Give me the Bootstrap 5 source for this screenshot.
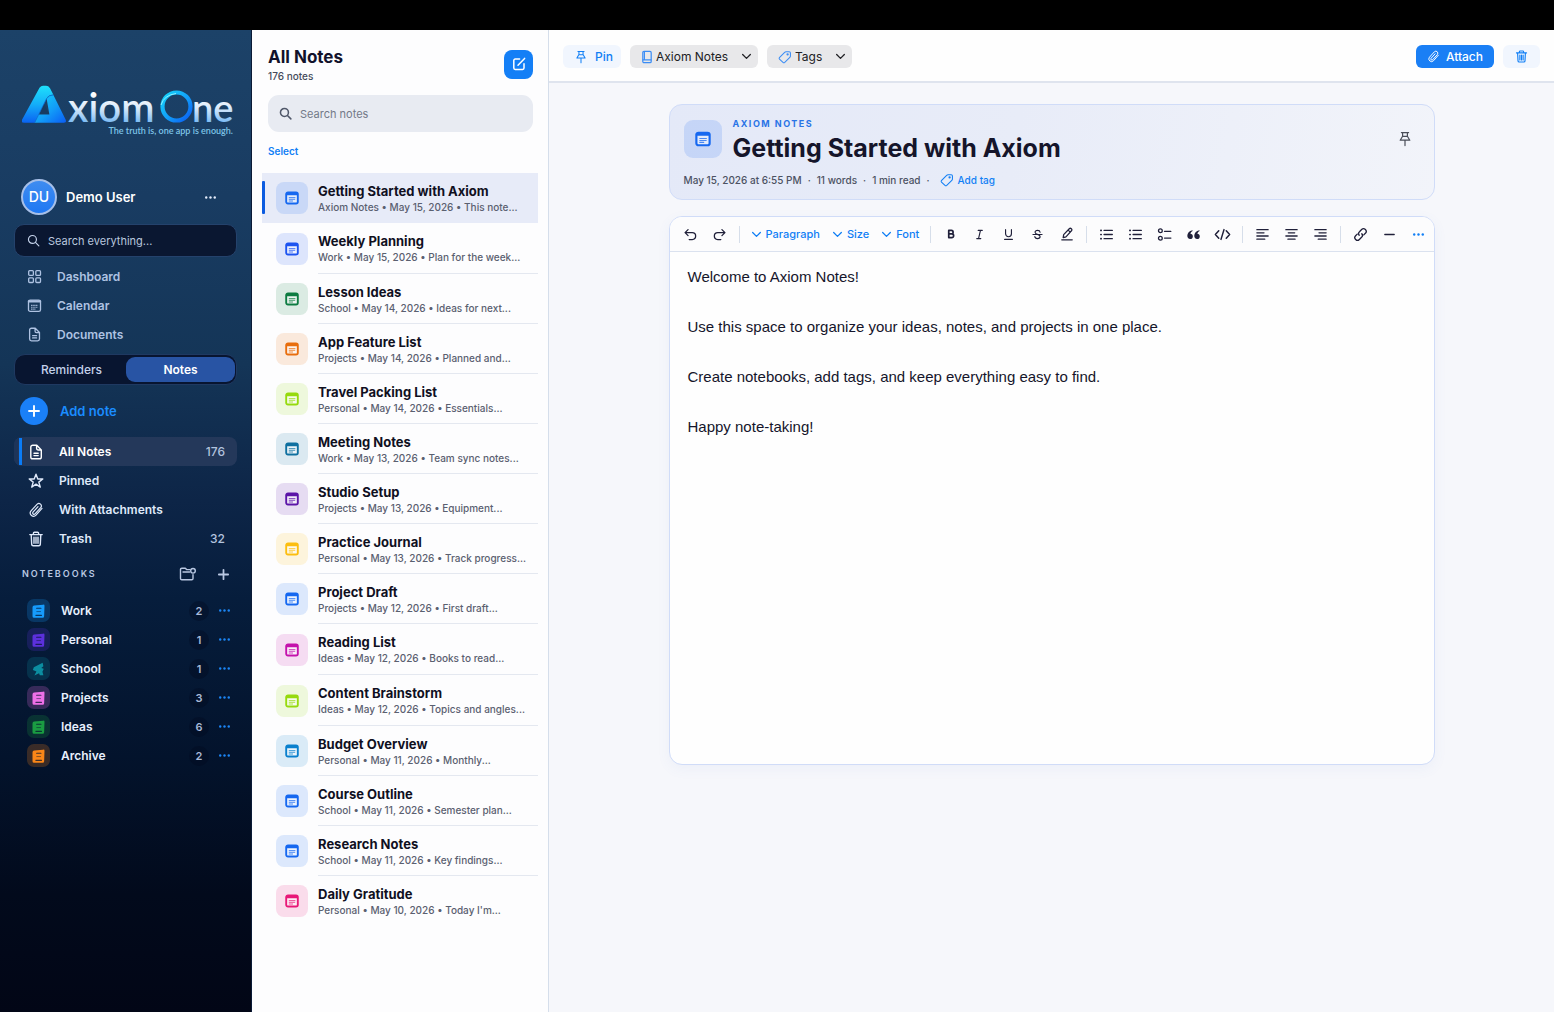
<!DOCTYPE html>
<html lang="en">
<head>
<meta charset="utf-8">
<meta name="viewport" content="width=device-width, initial-scale=1">
<title>AxiomOne Notes</title>
<link rel="stylesheet" href="https://cdn.jsdelivr.net/npm/bootstrap@5.3.0/dist/css/bootstrap.min.css">
<style>
  :root { --accent: #117ff5; --ink: #12122b; }
  body { font-family: Inter, "Liberation Sans", sans-serif; font-size: 13px; line-height: 16px; color: var(--ink); background: #f6f7fb; }
  svg { display: block; flex: none; }
  .ico { fill: none; stroke: currentColor; stroke-width: 1.4; stroke-linecap: round; stroke-linejoin: round; }
  .ico-strong { stroke-width: 1.9; }
  button { border: 0; background: none; padding: 0; color: inherit; }
  a { color: inherit; text-decoration: none; }
  .window-strip { height: 30px; background: #000; }

  /* Sidebar */
  .side { width: 252px; padding: 51px 14px 0 14px; color: #e3ecfb; font-weight: 600; border-right: 1px solid #0a1a36;
    background: linear-gradient(180deg, #1c4268 0%, #193c62 17%, #143557 34%, #0d2547 48%, #061d3c 58%, #03132c 74%, #020a1c 88%, #020616 100%); }
  .user-row { height: 36px; margin-top: 38px; padding: 0 20px 0 7px; }
  .avatar-disc { width: 36px; height: 36px; border: 2px solid #a6bfe8; border-radius: 50%; background: linear-gradient(#3f8cf0, #1f78f3); font-size: 14px; font-weight: 500; color: #fff; }
  .user-name { font-size: 13px; color: #fff; margin-left: 9px; }
  .side-search { height: 33px; margin-top: 9px; padding: 0 12px; border: 1px solid #24426c; border-radius: 10px; background: #0a1731; color: #c6d4ec; }
  .side-search input, .list-search input { border: 0; background: none; outline: 0; padding: 0; min-width: 0; font-size: 11px; color: inherit; }
  .side-search input::placeholder { color: #b9c7df; opacity: 1; }
  .nav-line { height: 29px; padding: 0 12px 0 14px; gap: 15px; border-radius: 8px; color: #dfe9fa; font-size: 12px; }
  .nav-main { margin-top: 5px; }
  .nav-main .nav-line { color: #aec2e2; padding-left: 13px; }
  .nav-line .tally { color: #b3c3df; font-weight: 500; }
  .nav-line.current { background: #24385a; color: #fff; box-shadow: inset 4px 0 0 #1d355a; position: relative; }
  .nav-line.current::before { content: ""; position: absolute; left: 5px; top: 1px; bottom: 1px; width: 3px; background: #0a7cf8; }
  .switcher { height: 31px; margin-top: 5px; padding: 2px 1px 2px 2px; border: 1px solid #1f3961; border-radius: 11px; background: #081530; font-size: 12px; color: #c3d1ea; }
  .switcher button { border-radius: 9px; font-weight: 500; }
  .switcher button.on { background: #2854a4; color: #fff; font-weight: 600; }
  .add-row { height: 28px; margin: 12px 0 12px 6px; gap: 12px; color: #1a8cff; font-size: 13px; }
  .add-disc { width: 28px; height: 28px; border-radius: 50%; background: #1a80f8; color: #fff; }
  .books-head { height: 30px; margin-top: 6px; padding: 0 7px 0 8px; font-size: 9px; letter-spacing: 2px; color: #b9c8e2; }
  .books-body { padding-top: 7px; }
  .book-line { height: 29px; padding: 0 6px 0 13px; font-size: 12px; color: #e8f0fd; }
  .book-tile { width: 23px; height: 23px; border-radius: 7px; margin-right: 11px; background: rgba(var(--tone), .22); color: rgb(var(--tone)); }
  .book-count { width: 20px; height: 20px; border-radius: 50%; background: rgba(2, 10, 30, .35); font-size: 11px; color: #a9bad8; margin-right: 9px; }
  .book-line .more { color: #1c86f5; }

  /* Notes list */
  .list-pane { width: 297px; background: #fdfdfe; border-right: 1px solid #d5deeb; padding: 15px 10px 0 10px; }
  .list-top { padding: 0 5px 0 6px; }
  .list-title { font-size: 17px; line-height: 24px; font-weight: 700; margin: 0; }
  .list-sub { font-size: 10px; line-height: 14px; font-weight: 500; color: #454b5b; }
  .compose { width: 29px; height: 29px; border-radius: 8px; background: #147ff6; color: #fff; }
  .list-search { height: 37px; margin: 12px 5px 0 6px; padding: 0 11px; border-radius: 11px; background: #e8ebf2; color: #50586a; }
  .list-search input::placeholder { color: #737988; opacity: 1; }
  .pick { margin: 11px 0 14px 6px; font-size: 10px; font-weight: 600; color: var(--accent); }
  .note { height: 50px; padding-left: 14px; }
  .note:nth-child(2), .note:nth-child(10), .note:nth-child(11) { height: 51px; }
  .note-tile { width: 32px; height: 32px; border-radius: 8px; background: rgba(var(--tone), .14); color: rgb(var(--tone)); margin-right: 10px; }
  .note-text { border-bottom: 1px solid #e4e8f0; height: 100%; padding-top: 9px; min-width: 0; }
  .note:last-child .note-text, .note.current .note-text { border-color: transparent; }
  .note-name { font-size: 13px; line-height: 18px; font-weight: 700; color: #10101f; }
  .note-meta { font-size: 10px; line-height: 14px; font-weight: 500; color: #5a6070; white-space: nowrap; }
  .note.current { background: #e7ebf8; position: relative; }
  .note.current::before { content: ""; position: absolute; left: 0; top: 8px; bottom: 9px; width: 3px; background: #0b5be0; border-radius: 1px; }

  .t-blue { --tone: 22, 104, 240; } .t-indigo { --tone: 30, 84, 240; } .t-green { --tone: 14, 124, 66; }
  .t-orange { --tone: 232, 110, 14; } .t-lime { --tone: 150, 218, 14; } .t-teal { --tone: 16, 112, 160; }
  .t-purple { --tone: 92, 22, 168; } .t-gold { --tone: 252, 190, 16; } .t-magenta { --tone: 196, 18, 172; }
  .t-sky { --tone: 10, 128, 206; } .t-pink { --tone: 232, 24, 120; }
  .b-blue { --tone: 22, 156, 252; } .b-violet { --tone: 92, 48, 220; } .b-teal { --tone: 12, 142, 160; }
  .b-pink { --tone: 238, 112, 232; } .b-green { --tone: 26, 156, 66; } .b-orange { --tone: 250, 134, 24; }

  /* Note view */
  .view-bar { height: 53px; padding: 2px 14px 0 14px; gap: 9px; background: #fefefe; border-bottom: 2px solid #dfe4ee; font-size: 12px; }
  .chip { height: 23px; border-radius: 6px; font-weight: 500; }
  .chip-soft { background: #f1f6fe; color: var(--accent); }
  .chip-grey { background: #e8e8ea; color: #202024; padding: 0 6px 0 11px; gap: 3px; font-weight: 400; }
  .chip-grey select { appearance: none; border: 0; background: none; padding: 0; color: inherit; }
  .chip-grey .caret { margin-left: 9px; }
  .chip-grey .lead-ico { color: #3b8df5; }
  .chip-fill { background: #1a7ff5; color: #fff; padding: 0 11px; gap: 6px; }
  .sheet-col { max-width: 766px; width: 100%; }
  .note-head { margin-top: 21px; padding: 12px 14px 11px 14px; border: 1px solid #d0dcf8; border-radius: 13px; background: linear-gradient(100deg, #e4e9f8, #e8ecf8 45%, #f2f4fa); }
  .head-tile { width: 38px; height: 38px; border-radius: 9px; background: rgba(var(--tone), .15); color: rgb(var(--tone)); margin-top: 3px; margin-right: 11px; }
  .head-pin { color: #4a4e58; margin: 0 8px 4px 0; }
  .kicker { font-size: 9px; line-height: 14px; font-weight: 700; letter-spacing: 1.5px; color: #2a74e6; }
  .head-name { font-size: 25px; line-height: 34px; font-weight: 700; margin: 0; color: #15152b; }
  .head-meta { font-size: 10px; line-height: 16px; font-weight: 500; color: #4c5263; gap: 6px; margin-top: 7px; }
  .head-meta a { color: var(--accent); }
  .editor { margin-top: 16px; height: 549px; border: 1px solid #d0dcf8; border-radius: 13px; background: #fefefe; box-shadow: 0 4px 14px rgba(90, 120, 200, .06); overflow: hidden; }
  .tools { height: 35px; border-bottom: 1px solid #dbe2ef; color: #20203a; padding-left: 6px; background: #fcfcfd; }
  .tools .split { width: 1px; height: 17px; margin: 0 5px; background: #d6deea; }
  .tools .tool { width: 29px; height: 24px; }
  .tools .tool svg { margin: 0 auto; }
  .tools .blue-drop { color: var(--accent); font-size: 11px; font-weight: 500; padding: 0 6px; gap: 4px; }
  .tools .more { color: var(--accent); }
  .page-text { font-family: "Liberation Sans", Arial, sans-serif; font-size: 15px; line-height: 25px; color: #15152b; padding: 12px 18px; outline: 0; }
  .page-text p { margin: 0 0 25px; }
</style>
<script src="https://cdn.jsdelivr.net/npm/bootstrap@5.3.0/dist/js/bootstrap.bundle.min.js"></script>
</head>
<body class="d-flex flex-column min-vh-100">

<svg width="0" height="0" class="position-absolute" aria-hidden="true">
  <symbol id="i-search" viewBox="0 0 16 16"><circle cx="6.7" cy="6.7" r="4.9"/><path d="M10.4 10.4 14.6 14.6"/></symbol>
  <symbol id="i-dots" viewBox="0 0 14 14"><g fill="currentColor" stroke="none"><circle cx="2.4" cy="7" r="1.3"/><circle cx="7" cy="7" r="1.3"/><circle cx="11.6" cy="7" r="1.3"/></g></symbol>
  <symbol id="i-grid" viewBox="0 0 16 16"><rect x="1.8" y="1.8" width="5" height="5" rx="1"/><rect x="9.4" y="1.8" width="5" height="5" rx="1"/><rect x="1.8" y="9.4" width="5" height="5" rx="1"/><rect x="9.4" y="9.4" width="5" height="5" rx="1"/></symbol>
  <symbol id="i-cal" viewBox="0 0 16 16"><rect x="1.6" y="2.2" width="12.8" height="12" rx="1.8"/><path d="M2 3.6h12" stroke-width="2.4"/><path d="M4.4 7.8h7.4M4.4 9.8h7.4M4.4 11.8h5" stroke-width="1.2" stroke-dasharray="1.5 .8" stroke-linecap="butt"/></symbol>
  <symbol id="i-doc" viewBox="0 0 16 16"><path d="M2.8 3.2a1.9 1.9 0 0 1 1.9-1.9h4.1l4.5 4.6v7a1.9 1.9 0 0 1-1.9 1.9H4.7a1.9 1.9 0 0 1-1.9-1.9zM8.6 1.6v3a1.4 1.4 0 0 0 1.4 1.4h3M6 9.2h4.2M6 11.6h4.2"/></symbol>
  <symbol id="i-star" viewBox="0 0 16 16"><path d="M8 1.2 9.8 6h5l-4 3.1 1.5 5L8 11.2l-4.3 2.9 1.5-5L1.2 6h5z"/></symbol>
  <symbol id="i-clip" viewBox="0 0 16 16"><path stroke-width="1.2" d="M14 6.4 8 13.200a3.300 3.300 0 0 1-5-4.300l6.200-6.800a2.500 2.500 0 0 1 3.700 3.300l-5.900 6.500a1.300 1.300 0 0 1-2-1.700l5-5.500"/></symbol>
  <symbol id="i-trash" viewBox="0 0 16 16"><path d="M1.8 3.6h12.4M5.400 3.400V2.200a1 1 0 0 1 1-1h3.200a1 1 0 0 1 1 1v1.200M3.200 3.800l.5 9.600a1.500 1.500 0 0 0 1.500 1.400h5.600a1.500 1.500 0 0 0 1.500-1.400l.5-9.600M6 6.200v6M8 6.200v6M10 6.200v6"/></symbol>
  <symbol id="i-folder" viewBox="0 0 18 16"><path d="M11 3.600H7.600L6.300 2.200H2.800A1.300 1.300 0 0 0 1.500 3.500v9a1.300 1.300 0 0 0 1.300 1.300h9.900a1.300 1.300 0 0 0 1.300-1.300V8.600M4 6h6.600"/><circle cx="14" cy="4.800" r="2.300"/></symbol>
  <symbol id="i-plus" viewBox="0 0 14 14"><path d="M7 2v10M2 7h10"/></symbol>
  <symbol id="i-book" viewBox="0 0 16 16"><path fill="currentColor" stroke="none" d="M1.600 4.200Q1.600 2.400 3.400 2.200L13 1.200Q14.600 1 14.400 2.600L14 13.600Q14 15.200 12.400 15.200H3.200Q1.600 15.200 1.600 13.600z"/><path stroke="#04132d" stroke-opacity=".75" stroke-width="1.200" d="M6 5h4.600M5.200 12.600h6"/><path stroke="#04132d" stroke-opacity=".5" stroke-width="1" d="M6.200 8.600h4"/></symbol>
  <symbol id="i-bolt" viewBox="0 0 16 16"><path fill="currentColor" stroke="none" d="M3 6 12.400 1.400 13.200 5 11 7l2.600.8-1.400 3 1 3.800H9.400L8.600 12.600 3.600 15l2.200-4.400L2 9z"/></symbol>
  <symbol id="i-note" viewBox="0 0 14 14"><rect x="1.200" y="1.500" width="11.600" height="11" rx="1.800" fill="#fff" fill-opacity=".5" stroke-width="1.900"/><path d="M2 3h10" stroke-width="2.400"/><path d="M4.200 6.600h5.800M4.200 8.300h5.600M4.200 10h3.400" stroke-width="1" stroke-opacity=".75"/></symbol>
  <symbol id="i-compose" viewBox="0 0 14 14"><path stroke-width="1.500" d="M7.600 2H3.200A1.400 1.400 0 0 0 1.800 3.400v7.600a1.400 1.400 0 0 0 1.400 1.400h7.400a1.400 1.400 0 0 0 1.400-1.400V6.800M6 8.200 12.600 1.400"/></symbol>
  <symbol id="i-pin" viewBox="0 0 14 16"><path stroke-width="1.200" d="M3.400 1.600h7.200M4.600 1.800v3.400L2.200 9.200h9.600L9.400 5.200V1.800M7 9.400v5.200M5.400 5.400h3.200"/></symbol>
  <symbol id="i-notebook" viewBox="0 0 12 16"><rect x="1.200" y="1.600" width="9.600" height="12.800" rx="1.400"/><path d="M1.400 11.400h9.200M3 2v9.200"/></symbol>
  <symbol id="i-tag" viewBox="0 0 16 16"><path stroke-width="1.200" d="M1.600 8.800 7.600 2.600Q8.200 2 9.200 2h3.600q1.400 0 1.400 1.400v3.400q0 1-.7 1.700l-5.800 5.700q-1 .9-2 0L1.700 10.500q-.8-.9-.1-1.700z"/><circle cx="11" cy="5" r=".6"/></symbol>
  <symbol id="i-chev" viewBox="0 0 12 12"><path d="M1.800 3.800 6 8l4.200-4.200"/></symbol>
  <symbol id="i-undo" viewBox="0 0 16 16"><path d="M5.400 2.800 2.200 6l3.200 3.200M2.400 6h7.400a3.700 3.700 0 0 1 0 7.400H6.600"/></symbol>
  <symbol id="i-redo" viewBox="0 0 16 16"><path d="M10.600 2.800 13.800 6l-3.200 3.200M13.600 6H6.200a3.700 3.700 0 0 0 0 7.400h3.200"/></symbol>
  <symbol id="i-pen" viewBox="0 0 16 16"><path d="M3.600 12.200 4.200 8.800 10.600 2a1.700 1.700 0 0 1 2.500 2.300L6.800 11.200zM2 14.600h12M9.400 3.600l2.200 2.200"/></symbol>
  <symbol id="i-list" viewBox="0 0 16 16"><path d="M5.400 3.600h8.800M5.400 8h8.800M5.400 12.400h8.800"/><path d="M2 3.600h.3M2 8h.3M2 12.400h.3" stroke-width="1.800"/></symbol>
  <symbol id="i-check" viewBox="0 0 16 16"><circle cx="3.600" cy="4" r="2"/><circle cx="3.600" cy="12" r="2"/><path d="M8 4.600h6.800M8 11.800h6.800"/></symbol>
  <symbol id="i-quote" viewBox="0 0 16 16"><path fill="currentColor" stroke="none" d="M6.800 3.400C3.400 4 1.400 6.400 1.400 9.400c0 2 1.200 3.400 3 3.400 1.700 0 2.900-1.200 2.900-2.800S6.200 7.400 4.700 7.300C5 6 5.700 5 7.100 4.300zM14.200 3.400c-3.400.6-5.400 3-5.400 6 0 2 1.200 3.400 3 3.400 1.700 0 2.900-1.200 2.900-2.800s-1.100-2.600-2.600-2.700c.3-1.300 1-2.300 2.400-3z"/></symbol>
  <symbol id="i-code" viewBox="0 0 18 16"><path stroke-width="1.600" d="M5 4 1.400 8 5 12M13 4l3.600 4L13 12M10.600 2.800 7.400 13.200"/></symbol>
  <symbol id="i-left" viewBox="0 0 16 16"><path d="M2 2.800h12M2 6.200h7.600M2 9.600h12M2 13h8.400"/></symbol>
  <symbol id="i-center" viewBox="0 0 16 16"><path d="M2 2.800h12M4.600 6.200h6.800M2 9.600h12M4.200 13h7.600"/></symbol>
  <symbol id="i-right" viewBox="0 0 16 16"><path d="M2 2.800h12M6.400 6.200H14M2 9.600h12M5.600 13H14"/></symbol>
  <symbol id="i-link" viewBox="0 0 16 16"><path d="M6.600 8.800a2.800 2.800 0 0 1 .3-3.800l2.300-2.300a2.800 2.800 0 0 1 4 4L11.500 8.400M9.400 7.200a2.800 2.800 0 0 1-.3 3.800l-2.300 2.300a2.800 2.800 0 0 1-4-4L4.500 7.600"/></symbol>
  <symbol id="i-bold" viewBox="0 0 16 16"><path d="M5 3.200h3.500a2.300 2.300 0 0 1 0 4.600H5zM5 7.800h4a2.500 2.500 0 0 1 0 5H5z" stroke-width="2.300"/></symbol>
  <symbol id="i-ital" viewBox="0 0 16 16"><path d="M6.400 3h5M4.600 13h5M9.200 3 6.800 13"/></symbol>
  <symbol id="i-under" viewBox="0 0 16 16"><path d="M4.400 2v5.200a3.600 3.600 0 0 0 7.200 0V2M3.200 14h9.600"/></symbol>
  <symbol id="i-strike" viewBox="0 0 16 16"><path d="M11.200 5.200c-.2-1.500-1.400-2.300-3.100-2.300-1.900 0-3.100.9-3.100 2.300 0 1.500 1.300 2.100 3 2.600 1.900.5 3.200 1.100 3.200 2.700 0 1.500-1.200 2.500-3.200 2.500-1.900 0-3.100-.8-3.300-2.400M2.400 8h11.200"/></symbol>
  <symbol id="i-rule" viewBox="0 0 16 16"><path d="M3 8h10"/></symbol>
</svg>

<div class="window-strip"></div>
<div class="d-flex flex-grow-1">

  <aside class="side flex-shrink-0">
    <svg class="ms-2" width="216" height="60" viewBox="0 -4 216 60" role="img" aria-label="AxiomOne">
      <defs>
        <linearGradient id="ga" x1="0" y1="0" x2="0" y2="1"><stop offset="0" stop-color="#1fe0fb"/><stop offset=".5" stop-color="#14aef8"/><stop offset="1" stop-color="#0a63f2"/></linearGradient>
        <linearGradient id="gb" x1="0" y1="0" x2="1" y2="1"><stop offset="0" stop-color="#14d6fa"/><stop offset=".55" stop-color="#129cf8"/><stop offset="1" stop-color="#0a5cf4"/></linearGradient>
        <linearGradient id="gt" gradientUnits="userSpaceOnUse" x1="0" y1="8" x2="0" y2="37"><stop offset="0" stop-color="#fff"/><stop offset=".5" stop-color="#dcebfb"/><stop offset="1" stop-color="#7dbcf5"/></linearGradient>
      </defs>
      <path fill="url(#ga)" d="M17.500 2.800Q19 .8 21 .8H24Q26.500.8 28 3.200L31.400 9.800Q27 9.400 24.600 13.500L12.600 37.800H2Q-1.500 37.800 0 34.800z"/>
      <path fill="url(#gb)" d="M24.600 13.500Q27 9.800 31.400 10L43.600 34.600Q45 37.800 41.600 37.800H12.600L16.400 29.600H27.400Z"/>
      <path d="M12.600 37.800 24.600 13.500Q27 9.800 31.400 10" fill="none" stroke="#0a6fd8" stroke-width=".8"/>
      <path fill="#173b62" d="M22.200 19.400 27 29H17.800z"/>
      <text x="46" y="37" font-family="Lato, sans-serif" font-size="40" fill="url(#gt)">xiom</text>
      <circle cx="154.500" cy="21.500" r="14" fill="none" stroke="url(#gb)" stroke-width="4.200"/>
      <path d="M139 20q3-10 15-11.500" fill="none" stroke="#8ff2ff" stroke-width="1"/>
      <text x="170" y="37" font-family="Lato, sans-serif" font-size="38" fill="url(#gt)">ne</text>
      <text x="211" y="49" text-anchor="end" font-family="Lato, sans-serif" font-size="9" fill="#7ec5e8">The truth is, one app is enough.</text>
    </svg>

    <div class="user-row d-flex align-items-center">
      <span class="avatar-disc d-flex align-items-center justify-content-center">DU</span>
      <span class="user-name flex-grow-1">Demo User</span>
      <button aria-label="Account menu"><svg class="ico" width="13" height="13"><use href="#i-dots"/></svg></button>
    </div>

    <label class="side-search d-flex align-items-center gap-2">
      <svg class="ico" width="13" height="13"><use href="#i-search"/></svg>
      <input class="flex-grow-1" type="search" placeholder="Search everything..." aria-label="Search everything">
    </label>

    <nav class="nav-main">
      <a href="#" class="nav-line d-flex align-items-center"><svg class="ico" width="15" height="15"><use href="#i-grid"/></svg>Dashboard</a>
      <a href="#" class="nav-line d-flex align-items-center"><svg class="ico" width="15" height="15"><use href="#i-cal"/></svg>Calendar</a>
      <a href="#" class="nav-line d-flex align-items-center"><svg class="ico" width="15" height="15"><use href="#i-doc"/></svg>Documents</a>
    </nav>

    <div class="switcher d-flex">
      <button class="flex-fill w-50">Reminders</button>
      <button class="flex-fill w-50 on">Notes</button>
    </div>

    <button class="add-row d-flex align-items-center fw-semibold">
      <span class="add-disc d-flex align-items-center justify-content-center"><svg class="ico ico-strong" width="14" height="14"><use href="#i-plus"/></svg></span>Add note
    </button>

    <nav>
      <a href="#" class="nav-line current d-flex align-items-center"><svg class="ico" width="16" height="16"><use href="#i-doc"/></svg><span class="flex-grow-1">All Notes</span><span class="tally">176</span></a>
      <a href="#" class="nav-line d-flex align-items-center"><svg class="ico" width="16" height="16"><use href="#i-star"/></svg>Pinned</a>
      <a href="#" class="nav-line d-flex align-items-center"><svg class="ico" width="16" height="16"><use href="#i-clip"/></svg>With Attachments</a>
      <a href="#" class="nav-line d-flex align-items-center"><svg class="ico" width="16" height="16"><use href="#i-trash"/></svg><span class="flex-grow-1">Trash</span><span class="tally">32</span></a>
    </nav>

    <div class="books-head d-flex align-items-center">
      <span class="flex-grow-1">NOTEBOOKS</span>
      <button class="me-3" aria-label="New group"><svg class="ico" width="18" height="16"><use href="#i-folder"/></svg></button>
      <button class="ms-1" aria-label="New notebook"><svg class="ico ico-strong" width="13" height="13"><use href="#i-plus"/></svg></button>
    </div>
    <div class="books-body">
      <div class="book-line d-flex align-items-center"><span class="book-tile b-blue d-flex align-items-center justify-content-center"><svg class="ico" width="15" height="16"><use href="#i-book"/></svg></span><a href="#" class="flex-grow-1">Work</a><span class="book-count d-flex align-items-center justify-content-center">2</span><button class="more" aria-label="Work menu"><svg class="ico" width="13" height="13"><use href="#i-dots"/></svg></button></div>
      <div class="book-line d-flex align-items-center"><span class="book-tile b-violet d-flex align-items-center justify-content-center"><svg class="ico" width="15" height="16"><use href="#i-book"/></svg></span><a href="#" class="flex-grow-1">Personal</a><span class="book-count d-flex align-items-center justify-content-center">1</span><button class="more" aria-label="Personal menu"><svg class="ico" width="13" height="13"><use href="#i-dots"/></svg></button></div>
      <div class="book-line d-flex align-items-center"><span class="book-tile b-teal d-flex align-items-center justify-content-center"><svg class="ico" width="15" height="16"><use href="#i-bolt"/></svg></span><a href="#" class="flex-grow-1">School</a><span class="book-count d-flex align-items-center justify-content-center">1</span><button class="more" aria-label="School menu"><svg class="ico" width="13" height="13"><use href="#i-dots"/></svg></button></div>
      <div class="book-line d-flex align-items-center"><span class="book-tile b-pink d-flex align-items-center justify-content-center"><svg class="ico" width="15" height="16"><use href="#i-book"/></svg></span><a href="#" class="flex-grow-1">Projects</a><span class="book-count d-flex align-items-center justify-content-center">3</span><button class="more" aria-label="Projects menu"><svg class="ico" width="13" height="13"><use href="#i-dots"/></svg></button></div>
      <div class="book-line d-flex align-items-center"><span class="book-tile b-green d-flex align-items-center justify-content-center"><svg class="ico" width="15" height="16"><use href="#i-book"/></svg></span><a href="#" class="flex-grow-1">Ideas</a><span class="book-count d-flex align-items-center justify-content-center">6</span><button class="more" aria-label="Ideas menu"><svg class="ico" width="13" height="13"><use href="#i-dots"/></svg></button></div>
      <div class="book-line d-flex align-items-center"><span class="book-tile b-orange d-flex align-items-center justify-content-center"><svg class="ico" width="15" height="16"><use href="#i-book"/></svg></span><a href="#" class="flex-grow-1">Archive</a><span class="book-count d-flex align-items-center justify-content-center">2</span><button class="more" aria-label="Archive menu"><svg class="ico" width="13" height="13"><use href="#i-dots"/></svg></button></div>
    </div>
  </aside>

  <section class="list-pane flex-shrink-0">
    <div class="list-top d-flex align-items-center justify-content-between">
      <div>
        <h1 class="list-title">All Notes</h1>
        <div class="list-sub">176 notes</div>
      </div>
      <button class="compose d-flex align-items-center justify-content-center" aria-label="New note"><svg class="ico" width="14" height="14"><use href="#i-compose"/></svg></button>
    </div>
    <label class="list-search d-flex align-items-center gap-2">
      <svg class="ico ico-strong" width="13" height="13"><use href="#i-search"/></svg>
      <input class="flex-grow-1" type="search" placeholder="Search notes" aria-label="Search notes">
    </label>
    <button class="pick d-block">Select</button>
    <div>
      <a href="#" class="note current d-flex align-items-center t-blue"><span class="note-tile d-flex align-items-center justify-content-center"><svg class="ico" width="14" height="14"><use href="#i-note"/></svg></span><span class="note-text flex-grow-1"><span class="note-name d-block">Getting Started with Axiom</span><span class="note-meta d-block">Axiom Notes • May 15, 2026 • This note...</span></span></a>
      <a href="#" class="note d-flex align-items-center t-indigo"><span class="note-tile d-flex align-items-center justify-content-center"><svg class="ico" width="14" height="14"><use href="#i-note"/></svg></span><span class="note-text flex-grow-1"><span class="note-name d-block">Weekly Planning</span><span class="note-meta d-block">Work • May 15, 2026 • Plan for the week...</span></span></a>
      <a href="#" class="note d-flex align-items-center t-green"><span class="note-tile d-flex align-items-center justify-content-center"><svg class="ico" width="14" height="14"><use href="#i-note"/></svg></span><span class="note-text flex-grow-1"><span class="note-name d-block">Lesson Ideas</span><span class="note-meta d-block">School • May 14, 2026 • Ideas for next...</span></span></a>
      <a href="#" class="note d-flex align-items-center t-orange"><span class="note-tile d-flex align-items-center justify-content-center"><svg class="ico" width="14" height="14"><use href="#i-note"/></svg></span><span class="note-text flex-grow-1"><span class="note-name d-block">App Feature List</span><span class="note-meta d-block">Projects • May 14, 2026 • Planned and...</span></span></a>
      <a href="#" class="note d-flex align-items-center t-lime"><span class="note-tile d-flex align-items-center justify-content-center"><svg class="ico" width="14" height="14"><use href="#i-note"/></svg></span><span class="note-text flex-grow-1"><span class="note-name d-block">Travel Packing List</span><span class="note-meta d-block">Personal • May 14, 2026 • Essentials...</span></span></a>
      <a href="#" class="note d-flex align-items-center t-teal"><span class="note-tile d-flex align-items-center justify-content-center"><svg class="ico" width="14" height="14"><use href="#i-note"/></svg></span><span class="note-text flex-grow-1"><span class="note-name d-block">Meeting Notes</span><span class="note-meta d-block">Work • May 13, 2026 • Team sync notes...</span></span></a>
      <a href="#" class="note d-flex align-items-center t-purple"><span class="note-tile d-flex align-items-center justify-content-center"><svg class="ico" width="14" height="14"><use href="#i-note"/></svg></span><span class="note-text flex-grow-1"><span class="note-name d-block">Studio Setup</span><span class="note-meta d-block">Projects • May 13, 2026 • Equipment...</span></span></a>
      <a href="#" class="note d-flex align-items-center t-gold"><span class="note-tile d-flex align-items-center justify-content-center"><svg class="ico" width="14" height="14"><use href="#i-note"/></svg></span><span class="note-text flex-grow-1"><span class="note-name d-block">Practice Journal</span><span class="note-meta d-block">Personal • May 13, 2026 • Track progress...</span></span></a>
      <a href="#" class="note d-flex align-items-center t-blue"><span class="note-tile d-flex align-items-center justify-content-center"><svg class="ico" width="14" height="14"><use href="#i-note"/></svg></span><span class="note-text flex-grow-1"><span class="note-name d-block">Project Draft</span><span class="note-meta d-block">Projects • May 12, 2026 • First draft...</span></span></a>
      <a href="#" class="note d-flex align-items-center t-magenta"><span class="note-tile d-flex align-items-center justify-content-center"><svg class="ico" width="14" height="14"><use href="#i-note"/></svg></span><span class="note-text flex-grow-1"><span class="note-name d-block">Reading List</span><span class="note-meta d-block">Ideas • May 12, 2026 • Books to read...</span></span></a>
      <a href="#" class="note d-flex align-items-center t-lime"><span class="note-tile d-flex align-items-center justify-content-center"><svg class="ico" width="14" height="14"><use href="#i-note"/></svg></span><span class="note-text flex-grow-1"><span class="note-name d-block">Content Brainstorm</span><span class="note-meta d-block">Ideas • May 12, 2026 • Topics and angles...</span></span></a>
      <a href="#" class="note d-flex align-items-center t-sky"><span class="note-tile d-flex align-items-center justify-content-center"><svg class="ico" width="14" height="14"><use href="#i-note"/></svg></span><span class="note-text flex-grow-1"><span class="note-name d-block">Budget Overview</span><span class="note-meta d-block">Personal • May 11, 2026 • Monthly...</span></span></a>
      <a href="#" class="note d-flex align-items-center t-blue"><span class="note-tile d-flex align-items-center justify-content-center"><svg class="ico" width="14" height="14"><use href="#i-note"/></svg></span><span class="note-text flex-grow-1"><span class="note-name d-block">Course Outline</span><span class="note-meta d-block">School • May 11, 2026 • Semester plan...</span></span></a>
      <a href="#" class="note d-flex align-items-center t-blue"><span class="note-tile d-flex align-items-center justify-content-center"><svg class="ico" width="14" height="14"><use href="#i-note"/></svg></span><span class="note-text flex-grow-1"><span class="note-name d-block">Research Notes</span><span class="note-meta d-block">School • May 11, 2026 • Key findings...</span></span></a>
      <a href="#" class="note d-flex align-items-center t-pink"><span class="note-tile d-flex align-items-center justify-content-center"><svg class="ico" width="14" height="14"><use href="#i-note"/></svg></span><span class="note-text flex-grow-1"><span class="note-name d-block">Daily Gratitude</span><span class="note-meta d-block">Personal • May 10, 2026 • Today I'm...</span></span></a>
    </div>
  </section>

  <main class="flex-grow-1 d-flex flex-column">
    <div class="view-bar d-flex align-items-center">
      <button class="chip chip-soft d-flex align-items-center gap-2 px-2"><svg class="ico ms-1" width="12" height="14"><use href="#i-pin"/></svg><span>Pin</span></button>
      <label class="chip chip-grey d-flex align-items-center">
        <svg class="ico lead-ico" width="12" height="14"><use href="#i-notebook"/></svg>
        <select aria-label="Notebook"><option>Axiom Notes</option></select>
        <svg class="ico caret" width="11" height="11"><use href="#i-chev"/></svg>
      </label>
      <label class="chip chip-grey d-flex align-items-center">
        <svg class="ico lead-ico" width="14" height="14"><use href="#i-tag"/></svg>
        <select aria-label="Tags"><option>Tags</option></select>
        <svg class="ico caret" width="11" height="11"><use href="#i-chev"/></svg>
      </label>
      <button class="chip chip-fill d-flex align-items-center ms-auto"><svg class="ico" width="13" height="13"><use href="#i-clip"/></svg>Attach</button>
      <button class="chip chip-soft px-2" aria-label="Delete note"><svg class="ico mx-1" width="13" height="13"><use href="#i-trash"/></svg></button>
    </div>

    <div class="sheet-col mx-auto">
      <header class="note-head">
        <div class="d-flex t-blue">
          <span class="head-tile d-flex align-items-center justify-content-center"><svg class="ico" width="16" height="16"><use href="#i-note"/></svg></span>
          <div class="flex-grow-1">
            <div class="kicker">AXIOM NOTES</div>
            <h2 class="head-name">Getting Started with Axiom</h2>
          </div>
          <button class="head-pin align-self-center" aria-label="Pin note"><svg class="ico" width="14" height="16"><use href="#i-pin"/></svg></button>
        </div>
        <div class="head-meta d-flex align-items-center">
          <span>May 15, 2026 at 6:55 PM</span><span>·</span><span>11 words</span><span>·</span><span>1 min read</span><span>·</span>
          <a href="#" class="d-flex align-items-center gap-1 ms-1"><svg class="ico" width="14" height="14"><use href="#i-tag"/></svg>Add tag</a>
        </div>
      </header>

      <section class="editor">
        <div class="tools d-flex align-items-center">
          <button class="tool" aria-label="Undo"><svg class="ico" width="15" height="15"><use href="#i-undo"/></svg></button>
          <button class="tool" aria-label="Redo"><svg class="ico" width="15" height="15"><use href="#i-redo"/></svg></button>
          <span class="split"></span>
          <button class="blue-drop d-flex align-items-center"><svg class="ico" width="11" height="11"><use href="#i-chev"/></svg>Paragraph</button>
          <button class="blue-drop d-flex align-items-center"><svg class="ico" width="11" height="11"><use href="#i-chev"/></svg>Size</button>
          <button class="blue-drop d-flex align-items-center"><svg class="ico" width="11" height="11"><use href="#i-chev"/></svg>Font</button>
          <span class="split"></span>
          <button class="tool" aria-label="Bold"><svg class="ico" width="12" height="12"><use href="#i-bold"/></svg></button>
          <button class="tool" aria-label="Italic"><svg class="ico" width="13" height="13"><use href="#i-ital"/></svg></button>
          <button class="tool" aria-label="Underline"><svg class="ico" width="13" height="13"><use href="#i-under"/></svg></button>
          <button class="tool" aria-label="Strikethrough"><svg class="ico" width="13" height="13"><use href="#i-strike"/></svg></button>
          <button class="tool" aria-label="Highlight"><svg class="ico" width="14" height="14"><use href="#i-pen"/></svg></button>
          <span class="split"></span>
          <button class="tool" aria-label="Bulleted list"><svg class="ico" width="15" height="15"><use href="#i-list"/></svg></button>
          <button class="tool" aria-label="Numbered list"><svg class="ico" width="15" height="15"><use href="#i-list"/></svg></button>
          <button class="tool" aria-label="Checklist"><svg class="ico" width="15" height="15"><use href="#i-check"/></svg></button>
          <button class="tool" aria-label="Quote"><svg class="ico" width="15" height="15"><use href="#i-quote"/></svg></button>
          <button class="tool" aria-label="Code"><svg class="ico" width="17" height="15"><use href="#i-code"/></svg></button>
          <span class="split"></span>
          <button class="tool" aria-label="Align left"><svg class="ico" width="15" height="15"><use href="#i-left"/></svg></button>
          <button class="tool" aria-label="Align center"><svg class="ico" width="15" height="15"><use href="#i-center"/></svg></button>
          <button class="tool" aria-label="Align right"><svg class="ico" width="15" height="15"><use href="#i-right"/></svg></button>
          <span class="split"></span>
          <button class="tool" aria-label="Link"><svg class="ico" width="15" height="15"><use href="#i-link"/></svg></button>
          <button class="tool" aria-label="Divider"><svg class="ico" width="15" height="15"><use href="#i-rule"/></svg></button>
          <button class="tool more" aria-label="More tools"><svg class="ico" width="13" height="13"><use href="#i-dots"/></svg></button>
        </div>
        <div class="page-text" contenteditable="true" role="textbox" aria-label="Note text" spellcheck="false">
          <p>Welcome to Axiom Notes!</p>
          <p>Use this space to organize your ideas, notes, and projects in one place.</p>
          <p>Create notebooks, add tags, and keep everything easy to find.</p>
          <p>Happy note-taking!</p>
        </div>
      </section>
    </div>
  </main>
</div>
</body>
</html>
